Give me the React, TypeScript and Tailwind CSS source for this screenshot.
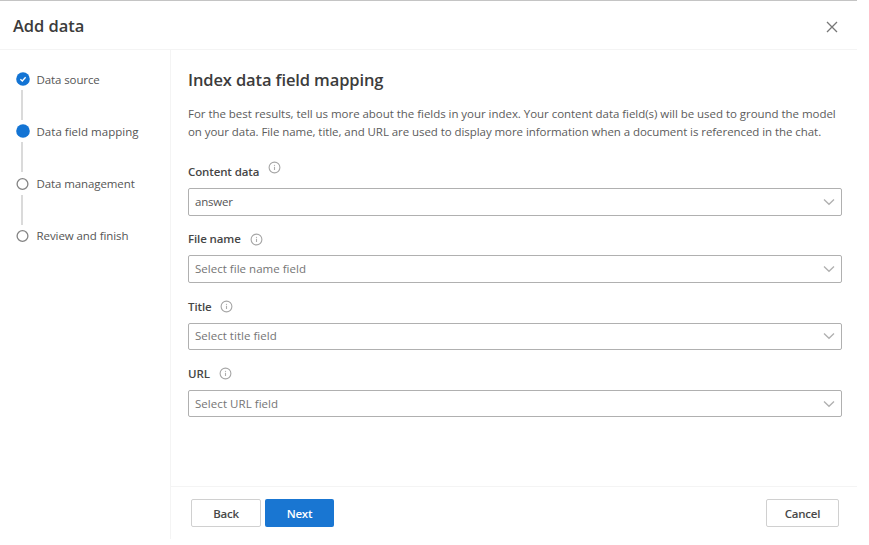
import React from "react";

function InfoIcon() {
  return (
    <svg width="13" height="13" viewBox="0 0 13 13" fill="none" className="block shrink-0">
      <circle cx="6.5" cy="6.5" r="5.4" stroke="#a6a6a6" strokeWidth="1.1" />
      <path d="M6.5 5.8V9" stroke="#acacac" strokeWidth="1.1" />
      <circle cx="6.5" cy="4.3" r="0.65" fill="#acacac" />
    </svg>
  );
}

type StepProps = { label: string; state: "done" | "current" | "todo"; text: string };

const steps: StepProps[] = [
  { label: "Data source", state: "done", text: "pt-px tracking-[-0.1px]" },
  { label: "Data field mapping", state: "current", text: "pt-px tracking-[0.02px]" },
  { label: "Data management", state: "todo", text: "tracking-[-0.1px]" },
  { label: "Review and finish", state: "todo", text: "tracking-[-0.08px]" },
];

function Marker({ state }: { state: StepProps["state"] }) {
  return (
    <svg width="14" height="14" viewBox="0 0 14 14" fill="none" className="shrink-0">
      {state === "todo" ? (
        <circle cx="6.5" cy="7" r="5.4" stroke="#848484" strokeWidth="1.3" />
      ) : (
        <circle cx="7" cy="7" r="6.8" fill="#1374d4" />
      )}
      {state === "done" && <path d="M4.4 7.3L6.3 9L9.6 5.3" stroke="#fff" strokeWidth="1.3" />}
    </svg>
  );
}

function Steps() {
  return (
    <ol className="pt-[22px] pl-4">
      {steps.map((s, i) => (
        <li key={s.label} className="h-[52.3px]">
          <div className="flex h-[14px] items-center gap-[6.5px]">
            <Marker state={s.state} />
            <span className={`text-[11.5px] leading-[14px] whitespace-nowrap text-[#555] ${s.text}`}>{s.label}</span>
          </div>
          {i < 3 && <div className="mt-1 ml-[5px] h-[30px] w-[2px] bg-[#dadada]" />}
        </li>
      ))}
    </ol>
  );
}

type FieldProps = { label: string; value: string; filled?: boolean; raised?: boolean; text: string };

const fields: FieldProps[] = [
  { label: "Content data", value: "answer", filled: true, raised: true, text: "tracking-[-0.2px]" },
  { label: "File name", value: "Select file name field", text: "tracking-[0.02px]" },
  { label: "Title", value: "Select title field", text: "tracking-[0.02px]" },
  { label: "URL", value: "Select URL field", text: "tracking-[0.05px]" },
];

function Field({ label, value, filled, raised, text }: FieldProps) {
  return (
    <div className="h-[67.3px]">
      <div className="flex h-[16px] items-center gap-[9px]">
        <span className="text-[11.5px] leading-4 font-semibold tracking-[-0.12px] text-[#464646]">{label}</span>
        <span className={raised ? "mb-[9px]" : ""}>
          <InfoIcon />
        </span>
      </div>
      <button className="mt-2 flex h-[27.5px] w-full items-center justify-between rounded-[2px] border border-[#b0b0b0] pr-[6px] pl-[6px]">
        <span className={`text-[11.5px] leading-4 ${text} ${filled ? "text-[#555]" : "text-[#757575]"}`}>{value}</span>
        <svg width="12" height="8" viewBox="0 0 12 8" fill="none">
          <path d="M1 1.5L6 6.3L11 1.5" stroke="#b0b0b0" strokeWidth="1.3" />
        </svg>
      </button>
    </div>
  );
}

export default function App() {
  return (
    <div className="h-[545px] w-[869px] overflow-hidden bg-white font-['Open_Sans','Noto_Sans',sans-serif]">
      <div className="flex h-[539px] w-[857px] flex-col border-t border-[#c4c4c4]">
        <header className="flex h-[49px] shrink-0 items-center justify-between border-b border-[#f4f4f4] pr-[19px] pl-[13px]">
          <h1 className="pt-[2px] text-[16.5px] font-semibold tracking-[-0.05px] text-[#3c3c3c]">Add data</h1>
          <svg width="12" height="12" viewBox="0 0 12 12" fill="none" className="mt-1">
            <path d="M1 1L11 11M11 1L1 11" stroke="#777" strokeWidth="1.3" />
          </svg>
        </header>
        <div className="flex min-h-0 flex-1">
          <nav className="w-[171px] shrink-0 border-r border-[#f4f4f4]">
            <Steps />
          </nav>
          <main className="flex flex-1 flex-col">
            <section className="flex-1 pt-[18px] pr-[15px] pl-[17px]">
              <h2 className="text-[16.5px] leading-[24px] font-semibold tracking-[-0.12px] text-[#3c3c3c]">
                Index data field mapping
              </h2>
              <p className="mt-[13px] text-[11.5px] leading-[18px] whitespace-nowrap text-[#5c5c5c]">
                <span className="block tracking-[-0.04px]">
                  For the best results, tell us more about the fields in your index. Your content data field(s) will be used to ground the model
                </span>
                <span className="block tracking-[-0.065px]">
                  on your data. File name, title, and URL are used to display more information when a document is referenced in the chat.
                </span>
              </p>
              <div className="mt-[23px]">
                {fields.map((f) => (
                  <Field key={f.label} {...f} />
                ))}
              </div>
            </section>
            <footer className="flex h-[53px] shrink-0 items-center gap-1 border-t border-[#f4f4f4] pr-[18px] pl-5 text-[11.5px] font-semibold tracking-[-0.2px]">
              <button className="h-[28px] w-[70px] rounded-[2px] border border-[#d0d0d0] pt-px text-[#484848]">Back</button>
              <button className="h-[28px] w-[69px] rounded-[2px] bg-[#1976d2] pt-px text-white">Next</button>
              <button className="ml-auto h-[28px] w-[73px] rounded-[2px] border border-[#d0d0d0] pt-px text-[#484848]">Cancel</button>
            </footer>
          </main>
        </div>
      </div>
    </div>
  );
}
